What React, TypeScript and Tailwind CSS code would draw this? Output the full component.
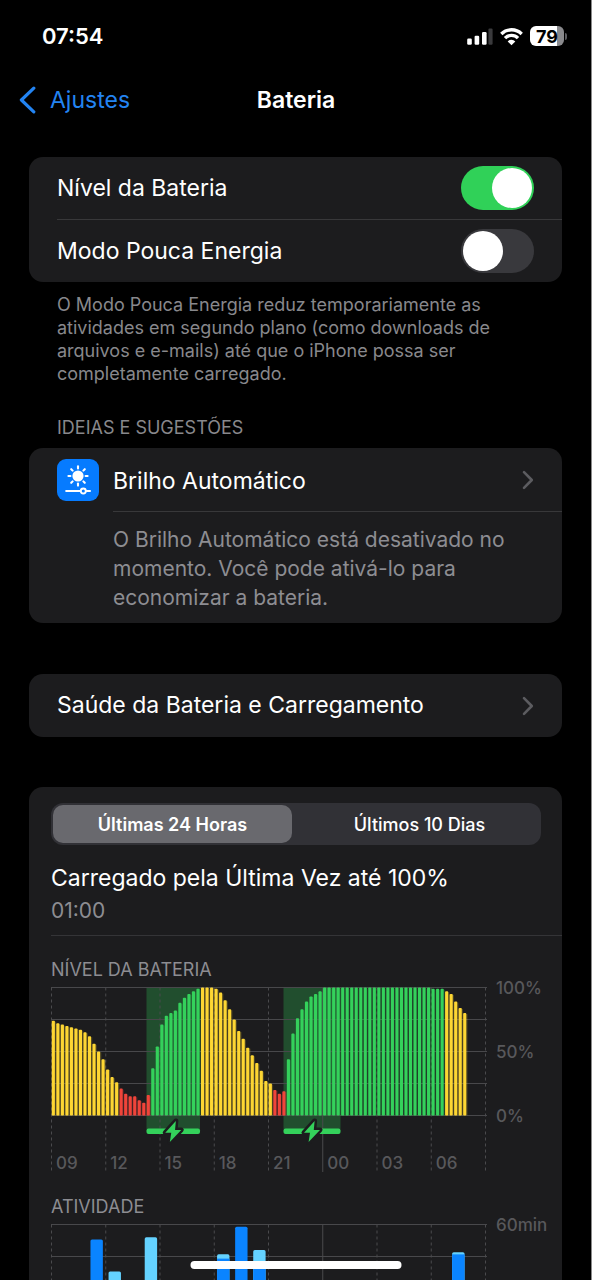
import { useState } from "react";

type Tone = "yellow" | "red" | "green";

interface LevelRun {
  tone: Tone;
  levels: number[];
}

interface ActivityBar {
  slot: number;
  total: number;
  screenOff: number;
}

const toneColors: Record<Tone, string> = {
  yellow: "#fdd633",
  red: "#f0443a",
  green: "#34d15b",
};

// One value per 15 minutes, starting at 09:00
const levelRuns: LevelRun[] = [
  { tone: "yellow", levels: [74, 72, 71, 70, 69, 68, 67, 65, 62, 56, 50, 44, 36, 30, 26] },
  { tone: "red", levels: [21, 17, 15, 15, 12, 10, 16] },
  { tone: "green", levels: [37, 54, 71, 78, 80, 82, 88, 92, 95, 97, 99] },
  { tone: "yellow", levels: [100, 100, 100, 99, 96, 90, 83, 75, 66, 60, 53, 47, 41, 35, 27, 25] },
  { tone: "red", levels: [20, 17, 19] },
  { tone: "green", levels: [44, 64, 76, 83, 89, 93, 95, 97, ...Array(24).fill(100), 99, 99, 99] },
  { tone: "yellow", levels: [97, 95, 89, 84, 80] },
];

const levelBars = levelRuns.flatMap((run) => run.levels.map((level) => ({ level, tone: run.tone })));

const charging = [
  { x: 95.5, width: 53.5 },
  { x: 232.5, width: 57 },
];

// Minutes of use per hour, screenOff is the light part on top
const activity: ActivityBar[] = [
  { slot: 2, total: 53, screenOff: 0 },
  { slot: 3, total: 38, screenOff: 38 },
  { slot: 5, total: 54, screenOff: 54 },
  { slot: 9, total: 46, screenOff: 2 },
  { slot: 10, total: 59, screenOff: 0 },
  { slot: 11, total: 48, screenOff: 8 },
  { slot: 22, total: 47, screenOff: 1 },
];

const hours = ["09", "12", "15", "18", "21", "00", "03", "06"];

const PLOT_WIDTH = 434;
const PLOT_HEIGHT = 128;
const PLOT_TOP = 5.5;
const PLOT_BOTTOM = PLOT_TOP + PLOT_HEIGHT;

function ChevronRight() {
  return (
    <svg className="h-5 w-3 shrink-0" viewBox="0 0 12 20" fill="none" stroke="#5c5c60" strokeWidth="2.6" strokeLinecap="round" strokeLinejoin="round" aria-hidden="true">
      <path d="M2 2.2 9.8 10 2 17.8" />
    </svg>
  );
}

function StatusBar() {
  return (
    <div className="flex h-[72px] shrink-0 items-center justify-between pr-[24px] pl-[42px]">
      <span className="text-[22px] font-semibold">07:54</span>
      <div className="flex items-center gap-[7px]">
        <svg className="h-5 w-[26px]" viewBox="0 0 26 20" fill="#fff" aria-hidden="true">
          <rect x="0.2" y="12.5" width="4.6" height="6.3" rx="1.2" />
          <rect x="7.6" y="9.8" width="4.6" height="9" rx="1.2" />
          <rect x="15" y="6" width="4.6" height="12.8" rx="1.2" />
          <rect x="21.4" y="2.5" width="4.2" height="16.3" rx="1.2" fill="#3a3a3c" />
        </svg>
        <svg className="h-5 w-[23px]" viewBox="0 0 23 20" fill="none" stroke="#fff" strokeWidth="3.4" aria-hidden="true">
          <path d="M1.3 7.9A14.8 14.8 0 0 1 21.7 7.9" />
          <path d="M5 12.1A9.2 9.2 0 0 1 18 12.1" />
          <path d="M11.5 19.2 7.7 15.4A5.4 5.4 0 0 1 15.3 15.4Z" fill="#fff" stroke="none" />
        </svg>
        <div className="flex items-center gap-px">
          <div className="flex h-5 w-[34px] items-center justify-center rounded-md bg-linear-to-r from-white from-78% to-[#8a8a8d] to-78% text-[18px] font-bold text-black">
            79
          </div>
          <span className="h-[7px] w-[2px] rounded-r-full bg-[#5c5c60]" />
        </div>
      </div>
    </div>
  );
}

interface SwitchRowProps {
  id: string;
  label: string;
  defaultChecked?: boolean;
}

function SwitchRow({ id, label, defaultChecked }: SwitchRowProps) {
  return (
    <div className="flex h-[62px] items-center justify-between pr-7">
      <label htmlFor={id} className="text-[23px]">
        {label}
      </label>
      <input
        id={id}
        type="checkbox"
        role="switch"
        defaultChecked={defaultChecked}
        className="h-11 w-[73px] appearance-none rounded-full bg-[#39393d] p-[2px] before:block before:size-10 before:rounded-full before:bg-white before:transition-transform checked:bg-[#30d158] checked:before:translate-x-[29px]"
      />
    </div>
  );
}

function BrightnessIcon() {
  return (
    <svg className="size-[42px] shrink-0" viewBox="0 0 42 42" aria-hidden="true">
      <rect width="42" height="42" rx="9" fill="#067bff" />
      <circle cx="21" cy="17" r="5.6" fill="#fff" />
      <g stroke="#fff" strokeWidth="2.1" strokeLinecap="round">
        {[0, 45, 90, 135, 180, 225, 270, 315].map((angle) => (
          <path key={angle} d="M21 7.4V9.4" transform={`rotate(${angle} 21 17)`} />
        ))}
        <path d="M9.2 32H23M29.5 32H33" />
      </g>
      <circle cx="26.3" cy="32" r="2.5" fill="none" stroke="#fff" strokeWidth="1.9" />
    </svg>
  );
}

function VerticalLines({ bottom }: { bottom: number }) {
  return (
    <g stroke="#4a4a4d" strokeWidth="1">
      {[...hours, "end"].map((hour, i) => (
        <path
          key={hour}
          d={`M${0.5 + (PLOT_WIDTH / 8) * i} ${PLOT_TOP}V${bottom}`}
          strokeDasharray={hour === "00" ? undefined : "3 3"}
        />
      ))}
    </g>
  );
}

function HorizontalLines() {
  return (
    <g stroke="#48484b" strokeWidth="1">
      {[0, 1, 2, 3, 4].map((i) => (
        <path key={i} d={`M0 ${PLOT_TOP + (PLOT_HEIGHT / 4) * i}H${PLOT_WIDTH + 2}`} />
      ))}
    </g>
  );
}

function LevelChart() {
  const step = PLOT_WIDTH / 96;

  return (
    <svg className="block w-full overflow-visible" viewBox="0 0 511 194" role="img" aria-label="Nível da Bateria">
      {charging.map((zone) => (
        <rect key={zone.x} x={zone.x} y={PLOT_TOP} width={zone.width} height="142" fill="#30d158" opacity="0.28" />
      ))}
      <HorizontalLines />
      <VerticalLines bottom={190} />

      {levelBars.map(({ level, tone }, i) => {
        const height = (level / 100) * PLOT_HEIGHT;
        return (
          <g key={i} fill={toneColors[tone]}>
            <rect x={0.6 + i * step} y={PLOT_BOTTOM - height + 1} width={step} height={height - 1} opacity="0.2" />
            <rect x={0.8 + i * step} y={PLOT_BOTTOM - height} width="3.1" height={height} rx="0.8" />
          </g>
        );
      })}

      {charging.map((zone) => (
        <g key={zone.x}>
          <rect x={zone.x} y="146.5" width={zone.width} height="5.6" rx="2" fill="#34d15b" />
          <path
            transform={`translate(${zone.x + zone.width / 2 - 9} 138.5)`}
            d="M11.6 0.5 1 12.2h6L5.6 21.5 17 9.4h-6.2Z"
            fill="#34d15b"
            stroke="#1c1c1e"
            strokeWidth="5"
            strokeLinejoin="round"
            paintOrder="stroke"
          />
        </g>
      ))}

      <g fill="#58585b" fontSize="17" fontWeight="500">
        {hours.map((hour, i) => (
          <text key={hour} x={5 + (PLOT_WIDTH / 8) * i} y="187">
            {hour}
          </text>
        ))}
        <text x="445" y="12">100%</text>
        <text x="445" y="76">50%</text>
        <text x="445" y="140">0%</text>
      </g>
    </svg>
  );
}

function ActivityChart() {
  const step = PLOT_WIDTH / 24;
  const minute = PLOT_HEIGHT / 60;

  return (
    <svg className="block w-full overflow-visible" viewBox="0 0 511 150" role="img" aria-label="Atividade">
      <HorizontalLines />
      <VerticalLines bottom={PLOT_BOTTOM} />

      {activity.map(({ slot, total, screenOff }) => {
        const x = 3.3 + slot * step;
        return (
          <g key={slot}>
            <rect x={x} y={PLOT_BOTTOM - total * minute} width="12.4" height={total * minute} rx="1.6" fill={screenOff > 0 ? "#64d2ff" : "#0a84ff"} />
            {screenOff > 0 && (
              <rect x={x} y={PLOT_BOTTOM - (total - screenOff) * minute} width="12.4" height={(total - screenOff) * minute} fill="#0a84ff" />
            )}
          </g>
        );
      })}

      <text x="445" y="12" fill="#58585b" fontSize="17" fontWeight="500">
        60min
      </text>
    </svg>
  );
}

const periods = ["Últimas 24 Horas", "Últimos 10 Dias"];

function UsageCard() {
  const [period, setPeriod] = useState(periods[0]);

  return (
    <section className="mt-[50px] rounded-[14px] bg-[#1c1c1e] pt-4 pl-[22px]">
      <div className="mr-[21px] grid h-[42px] grid-cols-2 gap-2 rounded-xl bg-[#313136] p-[2px]">
        {periods.map((item) => (
          <button
            key={item}
            type="button"
            aria-pressed={item === period}
            onClick={() => setPeriod(item)}
            className={`rounded-[10px] text-[18px] ${
              item === period ? "bg-[#69696e] font-semibold" : "font-medium"
            }`}
          >
            {item}
          </button>
        ))}
      </div>

      <h2 className="mt-[17px] text-[23px] leading-[33px]">Carregado pela Última Vez até 100%</h2>
      <p className="border-b border-[#343437] pb-2 text-[21px] leading-8 text-[#8d8d92]">01:00</p>

      <h3 className="mt-[22px] text-[18px] leading-6 text-[#8d8d92]">NÍVEL DA BATERIA</h3>
      <LevelChart />

      <h3 className="mt-[19px] text-[18px] leading-6 text-[#8d8d92]">ATIVIDADE</h3>
      <ActivityChart />
    </section>
  );
}

export default function App() {
  return (
    <div className="flex h-screen flex-col overflow-hidden border-r border-[#8a8a8a] bg-black font-[Inter,'Liberation_Sans',sans-serif] text-white">
      <StatusBar />

      <nav className="grid h-14 shrink-0 grid-cols-3 items-center pl-[19px] pr-[18px]">
        <a href="#ajustes" className="flex items-center gap-[14px] text-[23px] text-[#2384f2]">
          <svg className="h-7 w-[17px]" viewBox="0 0 17 28" fill="none" stroke="currentColor" strokeWidth="3.2" strokeLinecap="round" strokeLinejoin="round" aria-hidden="true">
            <path d="M14.8 2.2 2.4 14 14.8 25.8" />
          </svg>
          Ajustes
        </a>
        <h1 className="text-center text-[23px] font-semibold">Bateria</h1>
      </nav>

      <main className="flex-1 overflow-y-auto px-[29px] pt-[29px] [scrollbar-width:none]">
        <section className="rounded-[14px] bg-[#1c1c1e] pl-7">
          <SwitchRow id="battery-level" label="Nível da Bateria" defaultChecked />
          <div className="h-px bg-[#38383a]" />
          <SwitchRow id="low-power" label="Modo Pouca Energia" />
        </section>
        <p className="mt-[11px] px-7 text-[18px] leading-[23px] text-[#88888c]">
          O Modo Pouca Energia reduz temporariamente as atividades em segundo plano (como downloads de arquivos e e-mails) até que o iPhone possa ser completamente carregado.
        </p>

        <h2 className="mt-[31px] mb-2 px-7 text-[18px] leading-6 text-[#88888c]">IDEIAS E SUGESTÕES</h2>
        <section className="rounded-[14px] bg-[#1c1c1e] pl-7">
          <a href="#brilho" className="flex h-[63px] items-center gap-[14px] pr-7">
            <BrightnessIcon />
            <span className="flex-1 pt-[3px] text-[23px]">Brilho Automático</span>
            <ChevronRight />
          </a>
          <p className="ml-14 border-t border-[#38383a] pt-[13px] pr-11 pb-[11px] text-[21px] leading-[29px] text-[#8d8d92]">
            O Brilho Automático está desativado no momento. Você pode ativá-lo para economizar a bateria.
          </p>
        </section>

        <a href="#saude" className="mt-[51px] flex h-[63px] items-center justify-between rounded-[14px] bg-[#1c1c1e] px-7 text-[23px]">
          Saúde da Bateria e Carregamento
          <ChevronRight />
        </a>

        <UsageCard />
      </main>

      {/* Home indicator */}
      <div className="fixed bottom-[11px] left-1/2 h-2 w-[211px] -translate-x-1/2 rounded-full bg-white" />
    </div>
  );
}
